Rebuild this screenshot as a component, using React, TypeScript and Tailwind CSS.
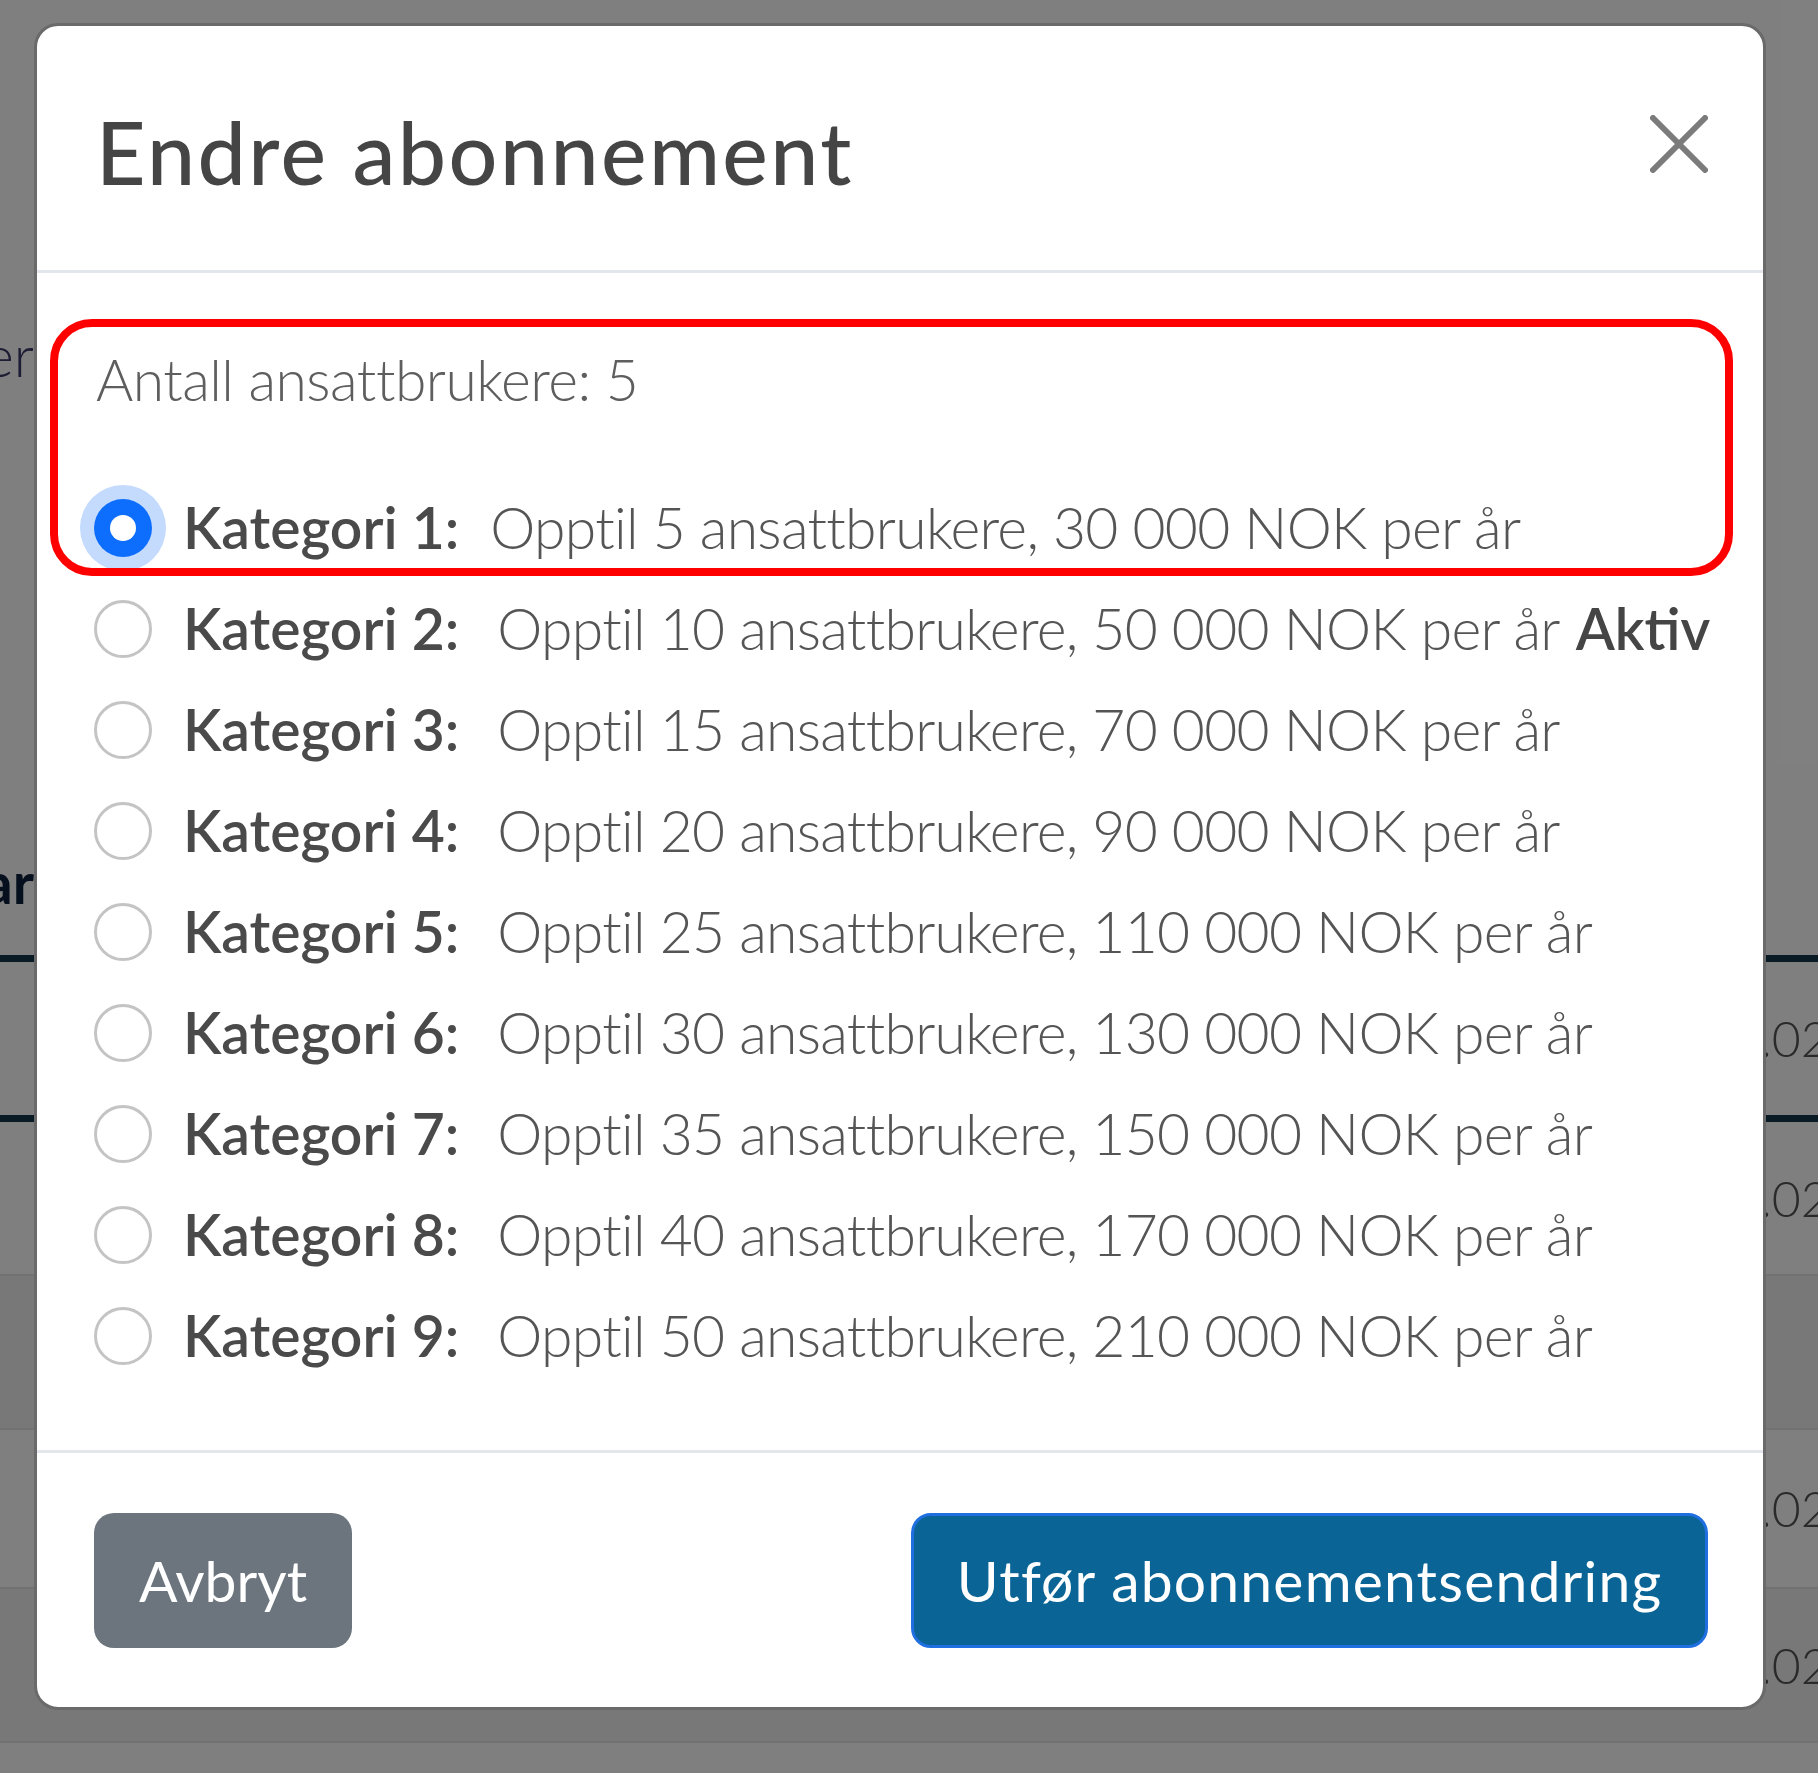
import React from "react";

const font = { fontFamily: "Lato, 'Open Sans', sans-serif" };

const categories = [
  { n: 1, users: 5, price: "30 000", active: false },
  { n: 2, users: 10, price: "50 000", active: true },
  { n: 3, users: 15, price: "70 000", active: false },
  { n: 4, users: 20, price: "90 000", active: false },
  { n: 5, users: 25, price: "110 000", active: false },
  { n: 6, users: 30, price: "130 000", active: false },
  { n: 7, users: 35, price: "150 000", active: false },
  { n: 8, users: 40, price: "170 000", active: false },
  { n: 9, users: 50, price: "210 000", active: false },
];

const Radio = ({ checked }: { checked: boolean }) =>
  checked ? (
    <span className="flex h-[58px] w-[58px] shrink-0 items-center justify-center rounded-full bg-[#0d6efd] shadow-[0_0_0_14px_#c4dbfe]">
      <span className="h-[26px] w-[26px] rounded-full bg-white" />
    </span>
  ) : (
    <span className="h-[58px] w-[58px] shrink-0 rounded-full border-[3px] border-[#c4c4c4] bg-white" />
  );

// page behind the dimmed overlay
const BackgroundPage = () => (
  <div className="flex h-[1773px] w-[1818px] flex-col bg-white text-[57px] font-light text-[#555]">
    <div className="h-[313px]" />
    <div className="flex h-[85px] items-center">
      <div className="flex w-[34px] justify-end overflow-hidden whitespace-nowrap text-[#3b3b6a]">Abonnenter</div>
    </div>
    <div className="h-[442px]" />
    <div className="flex h-[115px] items-start">
      <div className="flex w-[34px] justify-end overflow-hidden whitespace-nowrap font-bold text-[#0c1f3a]">Kommentar</div>
    </div>
    <div className="h-[7px] bg-[#17374d]" />
    <div className="flex h-[153px] items-center justify-end">
      <span className="w-[116px] overflow-hidden whitespace-nowrap text-[50px]">01.02.2024</span>
    </div>
    <div className="h-[7px] bg-[#17374d]" />
    <div className="flex h-[154px] items-center justify-end border-b-[2px] border-[#dee2e6]">
      <span className="w-[116px] overflow-hidden whitespace-nowrap text-[50px]">01.02.2024</span>
    </div>
    <div className="h-[154px] border-b-[2px] border-[#dee2e6] bg-[#f1f1f1]" />
    <div className="flex h-[159px] items-center justify-end border-b-[2px] border-[#dee2e6]">
      <span className="w-[116px] overflow-hidden whitespace-nowrap text-[50px]">01.02.2024</span>
    </div>
    <div className="flex h-[154px] items-center justify-end border-b-[2px] border-[#dee2e6] bg-[#f1f1f1]">
      <span className="w-[116px] overflow-hidden whitespace-nowrap text-[50px]">01.02.2024</span>
    </div>
    <div className="flex-1" />
  </div>
);

export default function App() {
  return (
    <div className="relative h-[1773px] w-[1818px] overflow-hidden" style={font}>
      <BackgroundPage />
      <div className="absolute inset-0 bg-black/50" />

      {/* modal */}
      <div className="absolute left-[34px] top-[23px] flex w-[1732px] flex-col rounded-[24px] border-[3px] border-[#6a6a6a] bg-white">
        <div className="flex h-[247px] items-center justify-between border-b-[3px] border-[#e3e6ea] pl-[59px] pr-[55px]">
          <h5 className="mt-[8px] text-[86px] font-medium leading-none tracking-[2.4px] text-[#454545]">Endre abonnement</h5>
          <svg width="58" height="58" viewBox="0 0 58 58" className="mb-[8px]">
            <path d="M3 3 L55 55 M55 3 L3 55" stroke="#7b7b7b" strokeWidth="6" strokeLinecap="round" />
          </svg>
        </div>

        <div className="relative flex flex-col pb-[64px] pl-[57px] pt-[64px]">
          <p className="ml-[2px] h-[85px] text-[57px] font-light leading-[85px] tracking-[-0.5px] text-[#5e5e5e]">Antall ansattbrukere: 5</p>
          <div className="mt-[55px] flex flex-col">
            {categories.map((c) => (
              <div key={c.n} className="flex h-[101px] items-center">
                <Radio checked={c.n === 1} />
                <span className="ml-[31px] whitespace-nowrap text-[57px] font-semibold text-[#4a4a4a]">Kategori {c.n}:</span>
                <span className={`${c.n === 1 ? "ml-[31px]" : "ml-[38px]"} whitespace-nowrap text-[57px] font-light tracking-[-0.7px] text-[#555]`}>
                  Opptil {c.users} ansattbrukere, {c.price} NOK per år
                </span>
                {c.active && <span className="ml-[16px] text-[57px] font-semibold text-[#454545]">Aktiv</span>}
              </div>
            ))}
          </div>
          {/* red highlight annotation */}
          <div className="absolute left-[13px] top-[46px] h-[257px] w-[1683px] rounded-[42px] border-[8px] border-[#ff0000]" />
        </div>

        <div className="flex items-center justify-between border-t-[3px] border-[#e3e6ea] pb-[59px] pl-[57px] pr-[55px] pt-[60px]">
          <button className="flex h-[135px] w-[258px] items-center justify-center rounded-[20px] bg-[#6c757d] text-[57px] text-white">
            Avbryt
          </button>
          <button className="flex h-[135px] w-[797px] items-center justify-center rounded-[20px] border-[3px] border-[#1f6fe0] bg-[#0b6496] text-[57px] tracking-[1.2px] text-white">
            Utfør abonnementsendring
          </button>
        </div>
      </div>
    </div>
  );
}
